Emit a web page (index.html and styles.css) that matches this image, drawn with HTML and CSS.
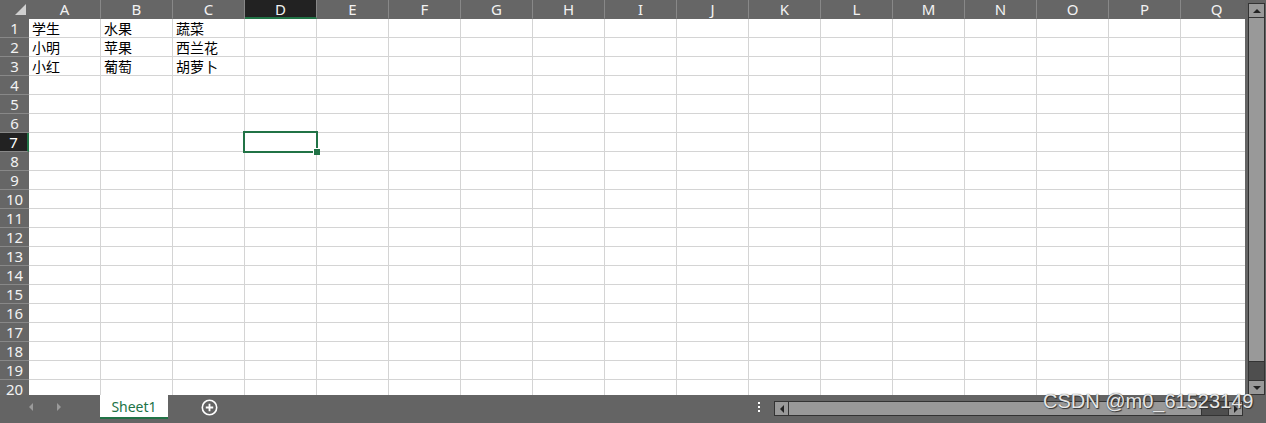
FILE: index.html
```html
<!DOCTYPE html>
<html lang="zh-CN">
<head>
    <meta charset="UTF-8">
    <title>Sheet1</title>
    <link rel="stylesheet" href="styles.css">
</head>
<body>
    <div class="app">
        <div class="main">
            <div class="sheet">
                <div class="row head">
                    <b class="corner"><i></i></b><span>A</span><span>B</span><span>C</span><span class="sel">D</span><span>E</span><span>F</span><span>G</span><span>H</span><span>I</span><span>J</span><span>K</span><span>L</span><span>M</span><span>N</span><span>O</span><span>P</span><span>Q</span>
                </div>
                <div class="row"><b>1</b><span>学生</span><span>水果</span><span>蔬菜</span><span></span><span></span><span></span><span></span><span></span><span></span><span></span><span></span><span></span><span></span><span></span><span></span><span></span><span></span></div>
                <div class="row"><b>2</b><span>小明</span><span>苹果</span><span>西兰花</span><span></span><span></span><span></span><span></span><span></span><span></span><span></span><span></span><span></span><span></span><span></span><span></span><span></span><span></span></div>
                <div class="row"><b>3</b><span>小红</span><span>葡萄</span><span>胡萝卜</span><span></span><span></span><span></span><span></span><span></span><span></span><span></span><span></span><span></span><span></span><span></span><span></span><span></span><span></span></div>
                <div class="row"><b>4</b><span></span><span></span><span></span><span></span><span></span><span></span><span></span><span></span><span></span><span></span><span></span><span></span><span></span><span></span><span></span><span></span><span></span></div>
                <div class="row"><b>5</b><span></span><span></span><span></span><span></span><span></span><span></span><span></span><span></span><span></span><span></span><span></span><span></span><span></span><span></span><span></span><span></span><span></span></div>
                <div class="row"><b>6</b><span></span><span></span><span></span><span></span><span></span><span></span><span></span><span></span><span></span><span></span><span></span><span></span><span></span><span></span><span></span><span></span><span></span></div>
                <div class="row"><b class="sel">7</b><span></span><span></span><span></span><span></span><span></span><span></span><span></span><span></span><span></span><span></span><span></span><span></span><span></span><span></span><span></span><span></span><span></span></div>
                <div class="row"><b>8</b><span></span><span></span><span></span><span></span><span></span><span></span><span></span><span></span><span></span><span></span><span></span><span></span><span></span><span></span><span></span><span></span><span></span></div>
                <div class="row"><b>9</b><span></span><span></span><span></span><span></span><span></span><span></span><span></span><span></span><span></span><span></span><span></span><span></span><span></span><span></span><span></span><span></span><span></span></div>
                <div class="row"><b>10</b><span></span><span></span><span></span><span></span><span></span><span></span><span></span><span></span><span></span><span></span><span></span><span></span><span></span><span></span><span></span><span></span><span></span></div>
                <div class="row"><b>11</b><span></span><span></span><span></span><span></span><span></span><span></span><span></span><span></span><span></span><span></span><span></span><span></span><span></span><span></span><span></span><span></span><span></span></div>
                <div class="row"><b>12</b><span></span><span></span><span></span><span></span><span></span><span></span><span></span><span></span><span></span><span></span><span></span><span></span><span></span><span></span><span></span><span></span><span></span></div>
                <div class="row"><b>13</b><span></span><span></span><span></span><span></span><span></span><span></span><span></span><span></span><span></span><span></span><span></span><span></span><span></span><span></span><span></span><span></span><span></span></div>
                <div class="row"><b>14</b><span></span><span></span><span></span><span></span><span></span><span></span><span></span><span></span><span></span><span></span><span></span><span></span><span></span><span></span><span></span><span></span><span></span></div>
                <div class="row"><b>15</b><span></span><span></span><span></span><span></span><span></span><span></span><span></span><span></span><span></span><span></span><span></span><span></span><span></span><span></span><span></span><span></span><span></span></div>
                <div class="row"><b>16</b><span></span><span></span><span></span><span></span><span></span><span></span><span></span><span></span><span></span><span></span><span></span><span></span><span></span><span></span><span></span><span></span><span></span></div>
                <div class="row"><b>17</b><span></span><span></span><span></span><span></span><span></span><span></span><span></span><span></span><span></span><span></span><span></span><span></span><span></span><span></span><span></span><span></span><span></span></div>
                <div class="row"><b>18</b><span></span><span></span><span></span><span></span><span></span><span></span><span></span><span></span><span></span><span></span><span></span><span></span><span></span><span></span><span></span><span></span><span></span></div>
                <div class="row"><b>19</b><span></span><span></span><span></span><span></span><span></span><span></span><span></span><span></span><span></span><span></span><span></span><span></span><span></span><span></span><span></span><span></span><span></span></div>
                <div class="row"><b>20</b><span></span><span></span><span></span><span></span><span></span><span></span><span></span><span></span><span></span><span></span><span></span><span></span><span></span><span></span><span></span><span></span><span></span></div>
                <div class="cursor"><i></i></div>
            </div>
            <div class="vscroll">
                <div class="btn"><i class="up"></i></div>
                <div class="thumb"></div>
                <div class="track"></div>
                <div class="btn"><i class="down"></i></div>
            </div>
        </div>
        <div class="bottom">
            <div class="nav">
                <i class="left"></i>
                <i class="right"></i>
            </div>
            <div class="tab">Sheet1</div>
            <div class="add">
                <svg width="17" height="17" viewBox="0 0 17 17">
                    <circle cx="8.5" cy="8.5" r="7.2" fill="none" stroke="#fff" stroke-width="1.6"/>
                    <path d="M8.5 4.8v7.4M4.8 8.5h7.4" stroke="#fff" stroke-width="1.8"/>
                </svg>
            </div>
            <div class="dots"><i></i><i></i><i></i></div>
            <div class="hscroll">
                <div class="btn"><i class="left"></i></div>
                <div class="thumb"></div>
                <div class="track"></div>
                <div class="btn"><i class="right"></i></div>
            </div>
        </div>
        <div class="mark">CSDN @m0_61523149</div>
    </div>
</body>
</html>
```

FILE: styles.css
```css
html, body {
    margin: 0;
    width: 100%;
    height: 100%;
    background: #646464;
    overflow: hidden;
}
.app {
    position: relative;
    width: 1266px;
    height: 423px;
    display: flex;
    flex-direction: column;
    font-family: "Noto Sans", "Noto Sans CJK SC", sans-serif;
}
.main {
    height: 395px;
    display: flex;
    overflow: hidden;
}
.sheet {
    position: relative;
    width: 1245px;
    flex: none;
    background: #fff;
    overflow: hidden;
}
.row {
    display: flex;
    height: 19px;
}
.row > * {
    flex: none;
    box-sizing: border-box;
    height: 19px;
    overflow: hidden;
}
.row span {
    width: 72px;
    border-right: 1px solid #d4d4d4;
    border-bottom: 1px solid #d4d4d4;
    padding-left: 3px;
    font-family: "Noto Sans CJK SC", sans-serif;
    font-size: 14px;
    line-height: 18px;
    color: #000;
    white-space: nowrap;
}
.row b {
    width: 29px;
    background: #666;
    border-bottom: 1px solid #888;
    color: #f2f2f2;
    font-weight: normal;
    font-size: 15px;
    line-height: 18px;
    text-align: center;
}
.row b.sel {
    background: #222;
    border-right: 2px solid #217346;
    color: #fff;
}
.head span {
    background: #666;
    color: #f2f2f2;
    border-right: 1px solid #888;
    border-bottom: 1px solid #666;
    padding: 0;
    font-family: "Noto Sans", sans-serif;
    font-size: 15px;
    text-align: center;
}
.head span.sel {
    background: #222;
    border-bottom: 2px solid #217346;
}
.head .corner {
    position: relative;
    border-bottom: 1px solid #666;
}
.corner i {
    position: absolute;
    right: 3px;
    bottom: 3px;
    width: 0;
    height: 0;
    border-left: 11px solid transparent;
    border-bottom: 11px solid #d0d0d0;
}
.cursor {
    position: absolute;
    left: 243px;
    top: 131px;
    width: 75px;
    height: 22px;
    box-sizing: border-box;
    border: 2px solid #217346;
}
.cursor i {
    position: absolute;
    right: -4px;
    bottom: -4px;
    width: 6px;
    height: 6px;
    background: #217346;
    border-left: 1px solid #fff;
    border-top: 1px solid #fff;
}
.vscroll {
    width: 15px;
    margin: 3px 0 0 3px;
    display: flex;
    flex-direction: column;
    background: #4e4e4e;
    border-left: 1px solid #333;
    border-right: 1px solid #333;
}
.vscroll .btn {
    height: 13px;
    flex: none;
    background: #999;
    border: 1px solid #333;
    margin: 0 -1px;
    display: flex;
    justify-content: center;
    align-items: center;
}
.vscroll .thumb {
    height: 343px;
    flex: none;
    background: #999;
    border-bottom: 1px solid #333;
}
.vscroll .track {
    flex: 1;
}
.up, .down, .left, .right {
    width: 0;
    height: 0;
}
.up {
    border: 4px solid transparent;
    border-top: 0;
    border-bottom: 4px solid #222;
}
.down {
    border: 4px solid transparent;
    border-bottom: 0;
    border-top: 4px solid #222;
}
.bottom {
    flex: 1;
    display: flex;
    align-items: flex-start;
    background: #646464;
}
.nav {
    width: 100px;
    height: 24px;
    display: flex;
    align-items: center;
    padding-left: 29px;
    box-sizing: border-box;
    gap: 24px;
}
.nav .left {
    border: 4px solid transparent;
    border-left: 0;
    border-right: 4px solid #9a9a9a;
}
.nav .right {
    border: 4px solid transparent;
    border-right: 0;
    border-left: 4px solid #9a9a9a;
}
.tab {
    width: 68px;
    height: 24px;
    box-sizing: border-box;
    background: #fff;
    border-bottom: 2px solid #217346;
    color: #217346;
    font-family: "Noto Sans", sans-serif;
    font-size: 14px;
    line-height: 23px;
    text-align: center;
}
.add {
    margin: 4px 0 0 33px;
    height: 17px;
}
.dots {
    margin: 7px 0 0 540px;
    width: 3px;
    display: flex;
    flex-direction: column;
    gap: 2px;
}
.dots i {
    width: 2px;
    height: 2px;
    background: #fff;
}
.hscroll {
    margin: 6px 0 0 13px;
    width: 469px;
    height: 15px;
    box-sizing: border-box;
    display: flex;
    background: #4e4e4e;
    border: 1px solid #333;
}
.hscroll .btn {
    width: 13px;
    flex: none;
    background: #999;
    display: flex;
    justify-content: center;
    align-items: center;
}
.hscroll .btn:first-child {
    border-right: 1px solid #333;
}
.hscroll .btn:last-child {
    border-left: 1px solid #333;
}
.hscroll .thumb {
    width: 412px;
    flex: none;
    background: #999;
    border-right: 1px solid #333;
}
.hscroll .track {
    flex: 1;
}
.hscroll .left {
    border: 4px solid transparent;
    border-left: 0;
    border-right: 4px solid #222;
}
.hscroll .right {
    border: 4px solid transparent;
    border-right: 0;
    border-left: 4px solid #222;
}
.mark {
    position: absolute;
    left: 1043px;
    top: 390px;
    font-family: "Liberation Sans", Arial, sans-serif;
    font-size: 20px;
    color: #e6e6e6;
    text-shadow: 0 0 1px #333, 1px 1px 1px #333;
    white-space: nowrap;
}
```
